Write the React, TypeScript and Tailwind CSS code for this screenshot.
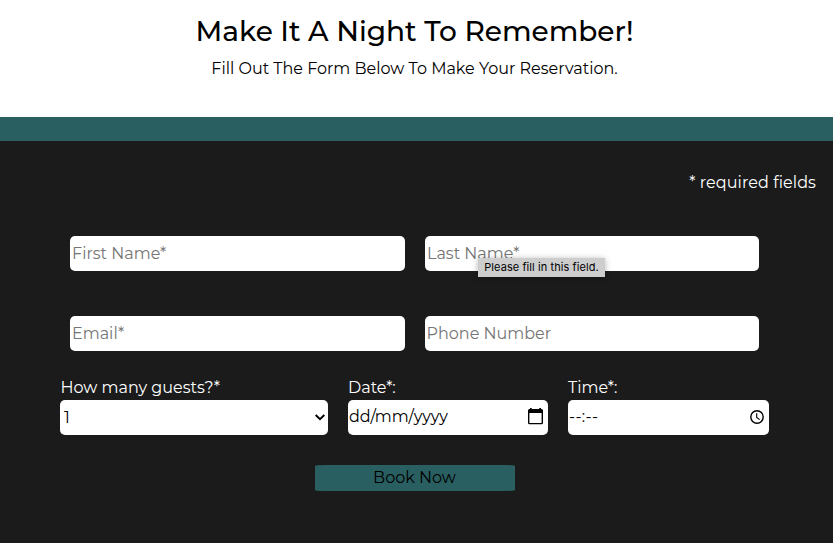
import React from 'react';

const fieldBox = 'flex h-[35px] items-center rounded-[5px] bg-white';

function Placeholder({ text }: { text: string }) {
  return (
    <div className={`${fieldBox} min-w-0 flex-1 pl-[2px] text-[#757575]`}>
      <span>{text}</span>
    </div>
  );
}

function CalendarIcon() {
  return (
    <svg width="15" height="17" viewBox="0 0 15 17" className="mb-[2px] shrink-0">
      <path
        fillRule="evenodd"
        d="M2 0h1.700v1h7.600V0H13v1h.5A1.500 1.500 0 0 1 15 2.500v12.300a1.500 1.500 0 0 1-1.500 1.500h-12A1.500 1.500 0 0 1 0 14.800V2.500a1.500 1.500 0 0 1 1.500-1.500H2zM1.400 5v9.900h12.200V5z"
        fill="#000"
      />
    </svg>
  );
}

function ClockIcon() {
  return (
    <svg width="14" height="14" viewBox="0 0 14 14" fill="none" stroke="#000" className="mb-px shrink-0">
      <circle cx="7" cy="7" r="6.200" strokeWidth="1.400" />
      <path d="M6.700 3.300v4.100l3 2.200" strokeWidth="1.100" />
    </svg>
  );
}

export default function App() {
  return (
    <div className="h-[543px] w-[833px] overflow-hidden bg-[#1b1b1b] font-['Montserrat','Inter',sans-serif] text-base leading-5 whitespace-nowrap">
      <header className="flex h-[117px] flex-col items-center bg-white pt-[11px] pr-[4px] text-black">
        <h1 className="text-[28px] leading-10 font-medium">Make It A Night To Remember!</h1>
        <p className="mt-2">Fill Out The Form Below To Make Your Reservation.</p>
      </header>
      <div className="h-6 bg-[#295f60]" />
      <main className="pr-[4px]">
        <p className="flex justify-end pt-8 pr-[13px] tracking-[0.08px] text-white">* required fields</p>
        <form>
          <div className="mt-[43px] flex gap-5 pr-[70px] pl-[70px]">
            <div className="flex w-[335px]">
              <Placeholder text="First Name*" />
            </div>
            <div className="relative flex w-[334px]">
              <Placeholder text="Last Name*" />
              <div
                role="tooltip"
                className="absolute top-[22px] left-[53px] flex h-[19px] w-[127px] items-center justify-center bg-[#cdcdcd] text-[11px] leading-[19px] text-black shadow-[0_1px_6px_rgba(0,0,0,0.3)]"
              >
                <span className="font-['Inter'] tracking-[0.08px]">Please fill in this field.</span>
              </div>
            </div>
          </div>
          <div className="mt-[45px] flex gap-5 pr-[70px] pl-[70px]">
            <Placeholder text="Email*" />
            <Placeholder text="Phone Number" />
          </div>
          <div className="mt-[26px] flex gap-5 pl-[60px]">
            <div className="w-[268px]">
              <label className="block h-[23px] pt-px pl-[0.5px] text-white">How many guests?*</label>
              <div className={`${fieldBox} justify-between pr-[3px] pl-[4px]`}>
                <span>1</span>
                <svg width="10" height="7" viewBox="0 0 10 7" fill="none" stroke="#000" strokeWidth="1.900">
                  <path d="M.7 1 5 5.200 9.300 1" />
                </svg>
              </div>
            </div>
            <div className="w-[200px]">
              <label className="block h-[23px] pt-px text-white">Date*:</label>
              <div className={`${fieldBox} justify-between pr-[5px] pl-px`}>
                <span className="pb-[2px] tracking-[-0.08px]">dd/mm/yyyy</span>
                <CalendarIcon />
              </div>
            </div>
            <div className="w-[201px]">
              <label className="block h-[23px] pt-px text-white">Time*:</label>
              <div className={`${fieldBox} justify-between pr-[5px] pl-px`}>
                <span className="pb-[2px] tracking-[0.3px]">--:--</span>
                <ClockIcon />
              </div>
            </div>
          </div>
          <button
            type="button"
            className="mt-[30px] ml-[315px] flex h-[26px] w-[200px] items-center justify-center rounded-[10px/1px] bg-[#295f60] pr-px text-black"
          >
            Book Now
          </button>
        </form>
      </main>
    </div>
  );
}
